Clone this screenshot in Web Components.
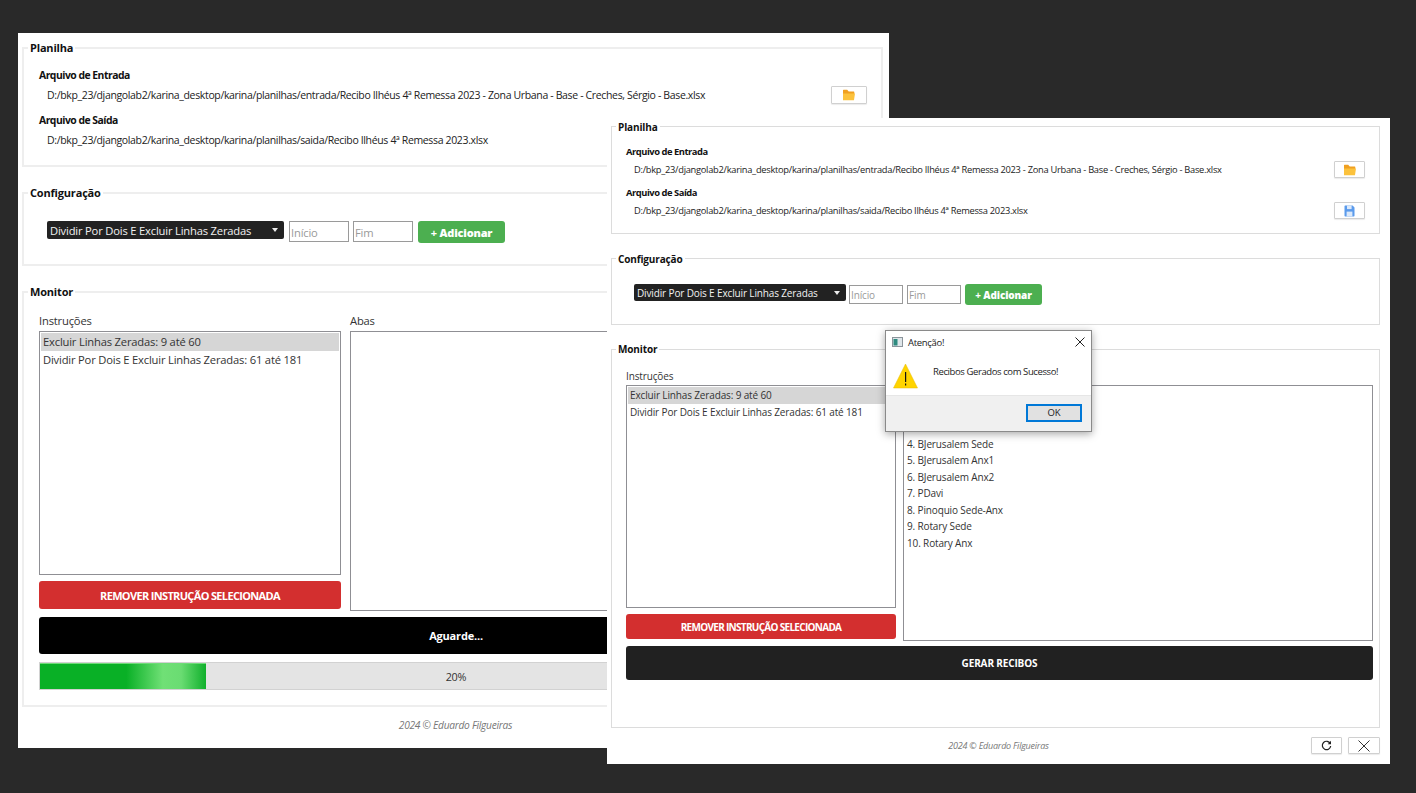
<!DOCTYPE html>
<html lang="pt-BR">
<head>
<meta charset="utf-8">
<title>Recibos</title>
<style>
  html, body { margin: 0; height: 100%; }
  body {
    background: #292929;
    position: relative;
    overflow: hidden;
    font-family: "Open Sans", "Noto Sans", sans-serif;
    color: #222;
  }
  .left {
    --text: 11.2px; --track: -0.18px; --bold: 11px; --legend-top: -9px;
    --path-track: -0.35px;
    left: 18px; top: 33px; width: 871px; height: 715px;
  }
  .right {
    --text: 10px; --track: -0.14px; --bold: 10px; --legend-top: -8px;
    --path-track: -0.275px;
    left: 607px; top: 118px; width: 783px; height: 646px;
  }
  .left .g1 { height: 120px; }
  .left .g2 { height: 74px; margin-top: 25px; }
  .left .g3 { height: 416px; margin-top: 25px; }
  .right .g1 { height: 108px; }
  .right .g2 { height: 67px; margin-top: 24px; }
  .right .g3 { height: 379px; margin-top: 24px; --legend-top: -9px; }
  .controls { display: flex; align-items: flex-start; }
  .monitor { display: grid; }
  .col { display: flex; flex-direction: column; min-width: 0; }
  .col list-box { flex: none; }
  .stretch { grid-column: 1 / -1; }
</style>
</head>
<body>

<receipt-window class="left" pad="14px 6px 0 4px" group-border="2px solid #eeeeee">
  <group-box class="g1" title="Planilha" pad="18px 14px 0 15px">
    <file-field label="Arquivo de Entrada" path="D:/bkp_23/djangolab2/karina_desktop/karina/planilhas/entrada/Recibo Ilhéus 4ª Remessa 2023 - Zona Urbana - Base - Creches, Sérgio - Base.xlsx" row="18" gap="3">
      <icon-button icon="folder" style="width:36px;height:18px"></icon-button>
    </file-field>
    <file-field label="Arquivo de Saída" path="D:/bkp_23/djangolab2/karina_desktop/karina/planilhas/saida/Recibo Ilhéus 4ª Remessa 2023.xlsx" row="18" gap="3" style="margin-top:8px"></file-field>
  </group-box>
  <group-box class="g2" title="Configuração" pad="27px 0 0 23px">
    <div class="controls">
      <combo-box value="Dividir Por Dois E Excluir Linhas Zeradas" style="width:237px;height:18px"></combo-box>
      <text-input hint="Início" style="width:60px;height:21px;margin-left:5px"></text-input>
      <text-input hint="Fim" style="width:60px;height:21px;margin-left:4px"></text-input>
      <action-button kind="green" style="width:87px;height:22px;margin-left:5px">+&nbsp;<b>Adicionar</b></action-button>
    </div>
  </group-box>
  <group-box class="g3" title="Monitor" pad="20px 8px 0 15px">
    <div class="monitor" style="grid-template-columns:302px 523px;column-gap:9px">
      <div class="col">
        <field-label>Instruções</field-label>
        <list-box selected="0" row="18" style="height:244px;margin-top:2px">
          <li-item>Excluir Linhas Zeradas: 9 até 60</li-item>
          <li-item>Dividir Por Dois E Excluir Linhas Zeradas: 61 até 181</li-item>
        </list-box>
        <action-button kind="red" style="height:28px;margin-top:6px;letter-spacing:-0.66px">REMOVER INSTRUÇÃO SELECIONADA</action-button>
      </div>
      <div class="col">
        <field-label>Abas</field-label>
        <list-box style="height:280px;margin-top:2px"></list-box>
      </div>
      <action-button class="stretch" kind="black" style="height:37px;margin-top:6px">Aguarde...</action-button>
      <progress-bar class="stretch" value="20" style="height:28px;margin-top:8px"></progress-bar>
    </div>
  </group-box>
  <window-footer slot="footer" style="height:41px;padding:0 0 5px 4px"></window-footer>
</receipt-window>

<receipt-window class="right" pad="8px 10px 0 4px" group-border="1px solid #dcdcdc">
  <group-box class="g1" title="Planilha" pad="17px 14px 0 14px">
    <file-field label="Arquivo de Entrada" path="D:/bkp_23/djangolab2/karina_desktop/karina/planilhas/entrada/Recibo Ilhéus 4ª Remessa 2023 - Zona Urbana - Base - Creches, Sérgio - Base.xlsx" row="17" gap="1">
      <icon-button icon="folder" style="width:31px;height:17px"></icon-button>
    </file-field>
    <file-field label="Arquivo de Saída" path="D:/bkp_23/djangolab2/karina_desktop/karina/planilhas/saida/Recibo Ilhéus 4ª Remessa 2023.xlsx" row="17" gap="1" style="margin-top:7px">
      <icon-button icon="save" style="width:31px;height:17px"></icon-button>
    </file-field>
  </group-box>
  <group-box class="g2" title="Configuração" pad="25px 0 0 22px">
    <div class="controls">
      <combo-box value="Dividir Por Dois E Excluir Linhas Zeradas" style="width:212px;height:17px"></combo-box>
      <text-input hint="Início" style="width:54px;height:19px;margin:1px 0 0 3px"></text-input>
      <text-input hint="Fim" style="width:54px;height:19px;margin:1px 0 0 4px"></text-input>
      <action-button kind="green" style="width:77px;height:21px;margin-left:4px">+&nbsp;<b>Adicionar</b></action-button>
    </div>
  </group-box>
  <group-box class="g3" title="Monitor" pad="18px 6px 0 14px">
    <div class="monitor" style="grid-template-columns:270px 470px;column-gap:7px">
      <div class="col">
        <field-label>Instruções</field-label>
        <list-box selected="0" row="17" style="height:223px;margin-top:1px">
          <li-item>Excluir Linhas Zeradas: 9 até 60</li-item>
          <li-item>Dividir Por Dois E Excluir Linhas Zeradas: 61 até 181</li-item>
        </list-box>
        <action-button kind="red" style="height:25px;margin-top:6px;letter-spacing:-0.7px">REMOVER INSTRUÇÃO SELECIONADA</action-button>
      </div>
      <div class="col">
        <field-label>Abas</field-label>
        <list-box row="16.5" style="height:256px;margin-top:1px;padding-top:0">
          <li-item>&nbsp;</li-item>
          <li-item>&nbsp;</li-item>
          <li-item>&nbsp;</li-item>
          <li-item>4. BJerusalem Sede</li-item>
          <li-item>5. BJerusalem Anx1</li-item>
          <li-item>6. BJerusalem Anx2</li-item>
          <li-item>7. PDavi</li-item>
          <li-item>8. Pinoquio Sede-Anx</li-item>
          <li-item>9. Rotary Sede</li-item>
          <li-item>10. Rotary Anx</li-item>
        </list-box>
      </div>
      <action-button class="stretch" kind="dark" style="height:34px;margin-top:5px">GERAR RECIBOS</action-button>
    </div>
  </group-box>
  <window-footer slot="footer" style="height:36px;padding-bottom:1px" tools></window-footer>
</receipt-window>

<alert-dialog style="left:885px;top:330px" heading="Atenção!" message="Recibos Gerados com Sucesso!"></alert-dialog>

<script>
'use strict';

const ICONS = {
  folder: '<svg width="14" height="12" viewBox="0 0 14 12"><path fill="#f0a020" d="M1 1.2c0-.3.2-.5.5-.5h3.7l1.5 1.7h5.1c.3 0 .5.2.5.5V5H1z"/><path fill="#fcc23c" d="M1 4.4h12L12 11c0 .2-.2.3-.4.3H1z"/></svg>',
  save: '<svg width="11" height="12" viewBox="0 0 11 12"><path fill="#5b9bec" d="M.5 1.2c0-.4.3-.7.7-.7h7.4l1.9 1.9v8.4c0 .4-.3.7-.7.7H1.2c-.4 0-.7-.3-.7-.7z"/><rect x="3" y=".5" width="4.6" height="3.6" fill="#dce9fa"/><rect x="2.6" y="6.6" width="5.8" height="4.9" fill="#dce9fa"/></svg>',
  reload: '<svg width="11" height="11" viewBox="0 0 11 11" fill="none"><path stroke="#222" stroke-width="1.2" d="M9.3 3.6A4.2 4.2 0 1 0 9.7 6"/><path fill="#222" d="M10 .8v3.4H6.7z"/></svg>',
  close: '<svg width="12" height="12" viewBox="0 0 12 12" fill="none"><path stroke="#333" stroke-width="1" d="M.5.5l11 11M11.5.5l-11 11"/></svg>'
};

class ReceiptWindow extends HTMLElement {
  connectedCallback() {
    this.attachShadow({mode: 'open'});
    this.shadowRoot.innerHTML = `
      <style>
        :host { position: absolute; display: flex; flex-direction: column; box-sizing: border-box; background: #fff; }
        .body { padding: ${this.getAttribute('pad')}; }
      </style>
      <div class="body"><slot></slot></div>
      <slot name="footer"></slot>
    `;
    this.style.setProperty('--group-border', this.getAttribute('group-border'));
  }
}

class GroupBox extends HTMLElement {
  connectedCallback() {
    this.attachShadow({mode: 'open'});
    this.shadowRoot.innerHTML = `
      <style>
        :host { display: block; box-sizing: border-box; position: relative; border: var(--group-border); padding: ${this.getAttribute('pad')}; }
        .legend {
          position: absolute; left: 4px; top: var(--legend-top); padding: 0 2px; background: #fff;
          font-weight: 700; font-size: var(--bold); line-height: 16px; letter-spacing: var(--track); color: #111;
        }
      </style>
      <div class="legend">${this.getAttribute('title')}</div>
      <slot></slot>
    `;
    this.removeAttribute('title');
  }
}

class FieldLabel extends HTMLElement {
  connectedCallback() {
    this.attachShadow({mode: 'open'});
    this.shadowRoot.innerHTML = `
      <style>
        :host { display: block; height: 16px; font-size: var(--text); line-height: 16px; letter-spacing: var(--track); color: #333; }
      </style>
      <slot></slot>
    `;
  }
}

class FileField extends HTMLElement {
  connectedCallback() {
    let row = this.getAttribute('row');
    this.attachShadow({mode: 'open'});
    this.shadowRoot.innerHTML = `
      <style>
        :host { display: block; }
        .label { font-weight: 700; font-size: calc(var(--bold) - 0.6px); line-height: 16px; letter-spacing: calc(var(--track) - 0.33px); color: #111; }
        .row {
          display: flex; justify-content: space-between; align-items: center; height: ${row}px;
          margin-top: ${this.getAttribute('gap')}px; padding-left: 8px;
          font-size: calc(var(--text) - 0.7px); letter-spacing: var(--path-track); color: #222; white-space: nowrap;
        }
      </style>
      <div class="label">${this.getAttribute('label')}</div>
      <div class="row"><span>${this.getAttribute('path')}</span><slot></slot></div>
    `;
  }
}

class IconButton extends HTMLElement {
  connectedCallback() {
    this.attachShadow({mode: 'open'});
    this.shadowRoot.innerHTML = `
      <style>
        :host { display: inline-flex; justify-content: center; align-items: center; box-sizing: border-box; flex: none; background: #fff; border: 1px solid #d0d0d0; border-radius: 1px; box-shadow: 0 1px 1px rgba(0,0,0,.08); }
      </style>
      ${ICONS[this.getAttribute('icon')]}
    `;
  }
}

class ComboBox extends HTMLElement {
  connectedCallback() {
    this.attachShadow({mode: 'open'});
    this.shadowRoot.innerHTML = `
      <style>
        :host { display: flex; align-items: center; box-sizing: border-box; flex: none; padding: 0 4px 0 3px; background: #222; color: #f2f2f2; border-radius: 2px; font-size: var(--text); letter-spacing: var(--track); white-space: nowrap; }
        .text { flex: 1; overflow: hidden; }
        .arrow { width: 0; height: 0; border: 3px solid transparent; border-top: 4px solid #eee; border-bottom: 0; margin-right: 2px; }
      </style>
      <span class="text">${this.getAttribute('value')}</span>
      <span class="arrow"></span>
    `;
  }
}

class TextInput extends HTMLElement {
  connectedCallback() {
    this.attachShadow({mode: 'open'});
    this.shadowRoot.innerHTML = `
      <style>
        :host { display: flex; align-items: center; box-sizing: border-box; flex: none; padding: 1px 1px 0; background: #fff; border: 1px solid #9a9a9a; color: #9a9a9a; font-size: var(--text); letter-spacing: var(--track); }
      </style>
      ${this.getAttribute('hint')}
    `;
  }
}

class ActionButton extends HTMLElement {
  connectedCallback() {
    this.attachShadow({mode: 'open'});
    const kinds = {
      green: '#4caf50',
      red: '#d32f2f',
      black: '#000000',
      dark: '#212121'
    };
    this.shadowRoot.innerHTML = `
      <style>
        :host { display: flex; justify-content: center; align-items: center; box-sizing: border-box; flex: none; background: ${kinds[this.getAttribute('kind')]}; color: #fff; border-radius: 3px; font-weight: 700; font-size: var(--bold); letter-spacing: var(--track); white-space: nowrap; }
      </style>
      <span><slot></slot></span>
    `;
  }
}

class ListBox extends HTMLElement {
  connectedCallback() {
    let row = this.getAttribute('row') || 18;
    this.style.setProperty('--row', row + 'px');
    let index = parseInt(this.getAttribute('selected'));
    if (!isNaN(index) && this.children[index]) {
      this.children[index].setAttribute('selected', '');
    }
    this.attachShadow({mode: 'open'});
    this.shadowRoot.innerHTML = `
      <style>
        :host { display: block; box-sizing: border-box; padding: 1px; background: #fff; border: 1px solid #8f8f94; overflow: hidden; }
      </style>
      <slot></slot>
    `;
  }
}

class ListItem extends HTMLElement {
  connectedCallback() {
    this.attachShadow({mode: 'open'});
    this.shadowRoot.innerHTML = `
      <style>
        :host { display: block; height: var(--row); line-height: var(--row); padding: 0 2px; font-size: var(--text); letter-spacing: var(--track); color: #333; white-space: nowrap; }
        :host([selected]) { background: #d6d6d6; }
      </style>
      <slot></slot>
    `;
  }
}

class ProgressBar extends HTMLElement {
  connectedCallback() {
    let value = this.getAttribute('value');
    this.attachShadow({mode: 'open'});
    this.shadowRoot.innerHTML = `
      <style>
        :host { display: block; position: relative; box-sizing: border-box; background: #e4e4e4; border: 1px solid #d2d2d2; overflow: hidden; }
        .fill { box-sizing: border-box; height: 100%; width: ${value}%; border-top: 1px solid #6fdc78; background: linear-gradient(90deg, #09b026 0%, #09b026 52%, #70e076 74%, #6adc72 85%, #10b02c 100%); }
        .text { position: absolute; inset: 0; display: flex; justify-content: center; align-items: center; font-size: calc(var(--text) - 0.4px); letter-spacing: var(--track); color: #333; }
      </style>
      <div class="fill"></div>
      <div class="text">${value}%</div>
    `;
  }
}

class WindowFooter extends HTMLElement {
  connectedCallback() {
    let tools = this.hasAttribute('tools') ? `
      <div class="tools">
        <icon-button icon="reload" style="width:31px;height:17px"></icon-button>
        <icon-button icon="close" style="width:32px;height:17px"></icon-button>
      </div>` : '';
    this.attachShadow({mode: 'open'});
    this.shadowRoot.innerHTML = `
      <style>
        :host { display: grid; grid-template-columns: 1fr auto 1fr; align-items: center; box-sizing: border-box; }
        .copy { grid-column: 2; font-style: italic; font-size: calc(var(--text) - 1px); letter-spacing: calc(var(--track) - 0.1px); color: #777; }
        .tools { grid-column: 3; justify-self: end; display: flex; gap: 6px; margin-right: 10px; }
      </style>
      <span class="copy">2024 © Eduardo Filgueiras</span>
      ${tools}
    `;
  }
}

class AlertDialog extends HTMLElement {
  connectedCallback() {
    this.attachShadow({mode: 'open'});
    this.shadowRoot.innerHTML = `
      <style>
        :host {
          position: absolute; display: flex; flex-direction: column; box-sizing: border-box; width: 207px; height: 102px;
          background: #fff; border: 1px solid #8a8a8a; box-shadow: 0 2px 8px rgba(0,0,0,.35);
          font-family: "Open Sans", sans-serif; font-size: 9.5px; color: #222;
        }
        .title { display: flex; align-items: center; height: 22px; padding: 0 6px; gap: 5px; }
        .title span { flex: 1; letter-spacing: -.3px; }
        .body { flex: 1; display: flex; align-items: flex-start; padding: 10px 0 0 7px; gap: 15px; }
        .msg { padding-top: 2px; letter-spacing: -.4px; }
        .foot { display: flex; justify-content: flex-end; align-items: center; height: 33px; padding: 0 9px 2px 0; background: #f0f0f0; border-top: 1px solid #e6e6e6; }
        .ok { display: flex; justify-content: center; align-items: center; box-sizing: border-box; width: 56px; height: 18px; background: #e1e1e1; border: 2px solid #0078d7; }
      </style>
      <div class="title">
        <svg width="11" height="10" viewBox="0 0 11 10"><rect x=".5" y=".5" width="10" height="9" fill="#dfe6ea" stroke="#8b949b"/><rect x="1.5" y="2" width="4" height="6.5" fill="#2d8a7f"/></svg>
        <span>${this.getAttribute('heading')}</span>
        <svg width="10" height="10" viewBox="0 0 10 10" fill="none"><path stroke="#222" d="M.5.5l9 9M9.5.5l-9 9"/></svg>
      </div>
      <div class="body">
        <svg width="25" height="26" viewBox="0 0 25 26"><path fill="#ffd400" stroke="#e6b800" stroke-width=".5" d="M12.5 1L24.5 25H.5z"/><rect x="12" y="9" width="1.2" height="10" fill="#111"/><rect x="12" y="20.5" width="1.2" height="2" fill="#111"/></svg>
        <span class="msg">${this.getAttribute('message')}</span>
      </div>
      <div class="foot"><div class="ok">OK</div></div>
    `;
  }
}

customElements.define('receipt-window', ReceiptWindow);
customElements.define('group-box', GroupBox);
customElements.define('field-label', FieldLabel);
customElements.define('file-field', FileField);
customElements.define('icon-button', IconButton);
customElements.define('combo-box', ComboBox);
customElements.define('text-input', TextInput);
customElements.define('action-button', ActionButton);
customElements.define('list-box', ListBox);
customElements.define('li-item', ListItem);
customElements.define('progress-bar', ProgressBar);
customElements.define('window-footer', WindowFooter);
customElements.define('alert-dialog', AlertDialog);
</script>
</body>
</html>
